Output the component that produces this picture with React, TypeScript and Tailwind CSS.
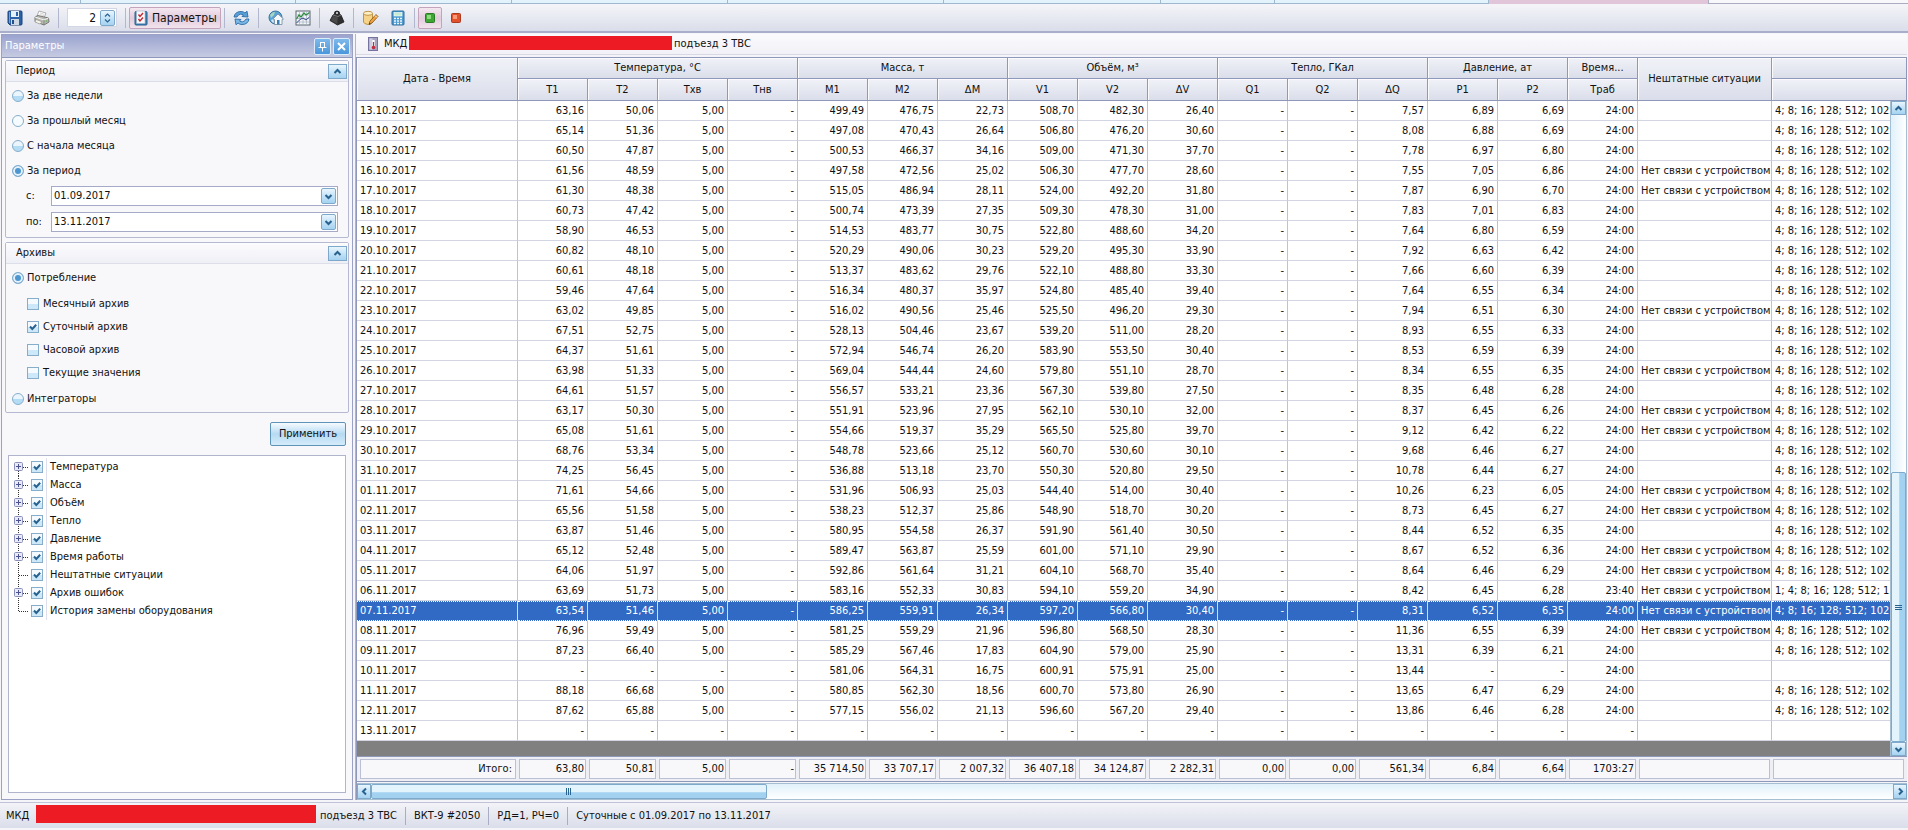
import { useState, type ReactNode } from 'react';

const LINK_LOST = 'Нет связи с устройством';
const ERRORS = '4; 8; 16; 128; 512; 102';

// date | T1 T2 Tхв Tнв M1 M2 ΔM V1 V2 ΔV Q1 Q2 ΔQ P1 P2 Траб | link lost | error codes
const RAW: [string, string, boolean, string][] = [
  ['13.10.2017', '63,16 50,06 5,00 - 499,49 476,75 22,73 508,70 482,30 26,40 - - 7,57 6,89 6,69 24:00', false, ERRORS],
  ['14.10.2017', '65,14 51,36 5,00 - 497,08 470,43 26,64 506,80 476,20 30,60 - - 8,08 6,88 6,69 24:00', false, ERRORS],
  ['15.10.2017', '60,50 47,87 5,00 - 500,53 466,37 34,16 509,00 471,30 37,70 - - 7,78 6,97 6,80 24:00', false, ERRORS],
  ['16.10.2017', '61,56 48,59 5,00 - 497,58 472,56 25,02 506,30 477,70 28,60 - - 7,55 7,05 6,86 24:00', true, ERRORS],
  ['17.10.2017', '61,30 48,38 5,00 - 515,05 486,94 28,11 524,00 492,20 31,80 - - 7,87 6,90 6,70 24:00', true, ERRORS],
  ['18.10.2017', '60,73 47,42 5,00 - 500,74 473,39 27,35 509,30 478,30 31,00 - - 7,83 7,01 6,83 24:00', false, ERRORS],
  ['19.10.2017', '58,90 46,53 5,00 - 514,53 483,77 30,75 522,80 488,60 34,20 - - 7,64 6,80 6,59 24:00', false, ERRORS],
  ['20.10.2017', '60,82 48,10 5,00 - 520,29 490,06 30,23 529,20 495,30 33,90 - - 7,92 6,63 6,42 24:00', false, ERRORS],
  ['21.10.2017', '60,61 48,18 5,00 - 513,37 483,62 29,76 522,10 488,80 33,30 - - 7,66 6,60 6,39 24:00', false, ERRORS],
  ['22.10.2017', '59,46 47,64 5,00 - 516,34 480,37 35,97 524,80 485,40 39,40 - - 7,64 6,55 6,34 24:00', false, ERRORS],
  ['23.10.2017', '63,02 49,85 5,00 - 516,02 490,56 25,46 525,50 496,20 29,30 - - 7,94 6,51 6,30 24:00', true, ERRORS],
  ['24.10.2017', '67,51 52,75 5,00 - 528,13 504,46 23,67 539,20 511,00 28,20 - - 8,93 6,55 6,33 24:00', false, ERRORS],
  ['25.10.2017', '64,37 51,61 5,00 - 572,94 546,74 26,20 583,90 553,50 30,40 - - 8,53 6,59 6,39 24:00', false, ERRORS],
  ['26.10.2017', '63,98 51,33 5,00 - 569,04 544,44 24,60 579,80 551,10 28,70 - - 8,34 6,55 6,35 24:00', true, ERRORS],
  ['27.10.2017', '64,61 51,57 5,00 - 556,57 533,21 23,36 567,30 539,80 27,50 - - 8,35 6,48 6,28 24:00', false, ERRORS],
  ['28.10.2017', '63,17 50,30 5,00 - 551,91 523,96 27,95 562,10 530,10 32,00 - - 8,37 6,45 6,26 24:00', true, ERRORS],
  ['29.10.2017', '65,08 51,61 5,00 - 554,66 519,37 35,29 565,50 525,80 39,70 - - 9,12 6,42 6,22 24:00', true, ERRORS],
  ['30.10.2017', '68,76 53,34 5,00 - 548,78 523,66 25,12 560,70 530,60 30,10 - - 9,68 6,46 6,27 24:00', false, ERRORS],
  ['31.10.2017', '74,25 56,45 5,00 - 536,88 513,18 23,70 550,30 520,80 29,50 - - 10,78 6,44 6,27 24:00', false, ERRORS],
  ['01.11.2017', '71,61 54,66 5,00 - 531,96 506,93 25,03 544,40 514,00 30,40 - - 10,26 6,23 6,05 24:00', true, ERRORS],
  ['02.11.2017', '65,56 51,58 5,00 - 538,23 512,37 25,86 548,90 518,70 30,20 - - 8,73 6,45 6,27 24:00', true, ERRORS],
  ['03.11.2017', '63,87 51,46 5,00 - 580,95 554,58 26,37 591,90 561,40 30,50 - - 8,44 6,52 6,35 24:00', false, ERRORS],
  ['04.11.2017', '65,12 52,48 5,00 - 589,47 563,87 25,59 601,00 571,10 29,90 - - 8,67 6,52 6,36 24:00', true, ERRORS],
  ['05.11.2017', '64,06 51,97 5,00 - 592,86 561,64 31,21 604,10 568,70 35,40 - - 8,64 6,46 6,29 24:00', true, ERRORS],
  ['06.11.2017', '63,69 51,73 5,00 - 583,16 552,33 30,83 594,10 559,20 34,90 - - 8,42 6,45 6,28 23:40', true, '1; 4; 8; 16; 128; 512; 1'],
  ['07.11.2017', '63,54 51,46 5,00 - 586,25 559,91 26,34 597,20 566,80 30,40 - - 8,31 6,52 6,35 24:00', true, ERRORS],
  ['08.11.2017', '76,96 59,49 5,00 - 581,25 559,29 21,96 596,80 568,50 28,30 - - 11,36 6,55 6,39 24:00', true, ERRORS],
  ['09.11.2017', '87,23 66,40 5,00 - 585,29 567,46 17,83 604,90 579,00 25,90 - - 13,31 6,39 6,21 24:00', false, ERRORS],
  ['10.11.2017', '- - - - 581,06 564,31 16,75 600,91 575,91 25,00 - - 13,44 - - 24:00', false, ''],
  ['11.11.2017', '88,18 66,68 5,00 - 580,85 562,30 18,56 600,70 573,80 26,90 - - 13,65 6,47 6,29 24:00', false, ERRORS],
  ['12.11.2017', '87,62 65,88 5,00 - 577,15 556,02 21,13 596,60 567,20 29,40 - - 13,86 6,46 6,28 24:00', false, ERRORS],
  ['13.11.2017', '- - - - - - - - - - - - - - - -', false, ''],
];

const TOTALS = ['63,80', '50,81', '5,00', '-', '35 714,50', '33 707,17', '2 007,32', '36 407,18', '34 124,87', '2 282,31', '0,00', '0,00', '561,34', '6,84', '6,64', '1703:27'];

const GROUPS = [
  { title: 'Температура, °C', cols: ['T1', 'T2', 'Tхв', 'Tнв'] },
  { title: 'Масса, т', cols: ['M1', 'M2', 'ΔM'] },
  { title: 'Объём, м³', cols: ['V1', 'V2', 'ΔV'] },
  { title: 'Тепло, ГКал', cols: ['Q1', 'Q2', 'ΔQ'] },
  { title: 'Давление, ат', cols: ['P1', 'P2'] },
  { title: 'Время...', cols: ['Tраб'] },
];

const TREE = [
  { label: 'Температура', open: true },
  { label: 'Масса', open: true },
  { label: 'Объём', open: true },
  { label: 'Тепло', open: true },
  { label: 'Давление', open: true },
  { label: 'Время работы', open: true },
  { label: 'Нештатные ситуации', open: false },
  { label: 'Архив ошибок', open: true },
  { label: 'История замены оборудования', open: false },
];

const blueButton = 'flex items-center justify-center border border-[#7fa9cb] bg-linear-to-b from-[#eaf6fe] via-[#c4e3f7] to-[#a5d3f1]';
const headCell = 'border-r border-b border-[#8f97ba] bg-linear-to-b from-[#f1f2f8] to-[#dadeea] p-0 text-center font-normal shadow-[inset_1px_1px_0_#fbfbfe]';

/* ---------- icons ---------- */

function Chevron({ dir }: { dir: 'up' | 'down' | 'left' | 'right' }) {
  const paths = {
    up: 'M1.5 6 L4.5 3 L7.5 6',
    down: 'M1.5 3 L4.5 6 L7.5 3',
    left: 'M6 1.5 L3 4.5 L6 7.5',
    right: 'M3 1.5 L6 4.5 L3 7.5',
  };
  return (
    <svg width="9" height="9" viewBox="0 0 9 9" fill="none" stroke="#28628f" strokeWidth="2">
      <path d={paths[dir]} />
    </svg>
  );
}

function SaveIcon() {
  return (
    <svg width="16" height="16" viewBox="0 0 16 16">
      <path d="M1 2 Q1 1 2 1 H14 Q15 1 15 2 V14 Q15 15 14 15 H3 L1 13 Z" fill="#2c63a8" stroke="#1c4379" />
      <rect x="4" y="1" width="8" height="6" fill="#e6f0fa" />
      <rect x="9" y="2" width="2" height="4" fill="#2c63a8" />
      <rect x="4" y="9" width="8" height="6" fill="#cfd9e4" />
      <rect x="5" y="10" width="2" height="4" fill="#24508a" />
      <path d="M2.5 2 V13" stroke="#6fa3dc" />
    </svg>
  );
}

function PrinterIcon() {
  return (
    <svg width="16" height="16" viewBox="0 0 16 16" strokeLinejoin="round">
      <path d="M5 1 L12 3 L10 8 L3 6 Z" fill="#fff" stroke="#9a9a9a" strokeWidth=".8" />
      <path d="M6 3 L10.5 4.3 M5.5 4.5 L10 5.8" stroke="#bbb" strokeWidth=".6" />
      <path d="M1 7 L4 5.5 L14.5 8 L15 12 L10 15 L1 11.5 Z" fill="#b9b9b4" stroke="#6d6d69" strokeWidth=".9" />
      <path d="M1 7 L10 10 L14.5 8" fill="none" stroke="#f4f4f0" />
      <path d="M10 10 V15" stroke="#777" strokeWidth=".8" />
      <path d="M2 9.5 L8 11.7 L6 14 L1 12 Z" fill="#f5f5ee" stroke="#8b8b84" strokeWidth=".6" />
      <circle cx="12.5" cy="11" r=".8" fill="#5fae4c" />
    </svg>
  );
}

function ChecklistIcon() {
  return (
    <svg width="14" height="16" viewBox="0 0 14 16">
      <rect x="1" y="1.5" width="12" height="13.5" rx="1" fill="#3f82b8" stroke="#27608f" />
      <rect x="2.5" y="1" width="8.5" height="12.5" fill="#f4f6fa" stroke="#9fb6cc" strokeWidth=".6" />
      <path d="M4.5 4.5 L6 6.5 L9 3 M4.5 9 L6 11 L9 7.5" fill="none" stroke="#c4272e" strokeWidth="1.4" />
    </svg>
  );
}

function RefreshIcon() {
  return (
    <svg width="17" height="16" viewBox="0 0 17 16" strokeLinejoin="round">
      <path d="M1 7 Q2 1.5 8 1.5 Q10.5 1.5 12 3 L14 1.2 L15 7 L9 6.5 L10.5 5 Q9 4 7.5 4.2 Q5 4.5 4 7 Z" fill="#5aa0d8" stroke="#2b6ba6" strokeWidth=".9" />
      <path d="M16 9 Q15 14.5 9 14.5 Q6.5 14.5 5 13 L3 14.8 L2 9 L8 9.5 L6.5 11 Q8 12 9.5 11.8 Q12 11.5 13 9 Z" fill="#7ab8e6" stroke="#2b6ba6" strokeWidth=".9" />
    </svg>
  );
}

function HomeGlobeIcon() {
  return (
    <svg width="16" height="16" viewBox="0 0 16 16" strokeLinejoin="round">
      <circle cx="7.5" cy="7.5" r="6.5" fill="#5ba3d6" stroke="#39759f" />
      <path d="M2 5 Q4 1.8 7 2 L6 5 L3 8 Z" fill="#a6d5c0" />
      <path d="M3 10 L5.5 9 L6 13 Q3.5 12.5 3 10" fill="#cfe7f6" />
      <path d="M5 9 L10 4 L15.5 9 L14 9.5 V14.5 H6.5 V9.5 Z" fill="#f7fafc" stroke="#7d93a6" strokeWidth=".9" />
      <rect x="9" y="10" width="2.5" height="4.5" fill="#3b7fb8" />
    </svg>
  );
}

function ChartIcon() {
  return (
    <svg width="16" height="16" viewBox="0 0 16 16" fill="none">
      <rect x="1" y="1" width="14" height="14" fill="#f2f5f8" stroke="#5c6670" />
      <path d="M4.5 1 V15 M8 1 V15 M11.5 1 V15 M1 5 H15 M1 8.5 H15 M1 12 H15" stroke="#a3b2c2" strokeWidth=".7" />
      <path d="M1.5 9 L4 5 L6 7 L9 3 L11 5 L14.5 2.5" stroke="#2c8a3d" strokeWidth="1.2" />
      <path d="M1.5 13 L5 9.5 L8 8 L11 10 L14.5 7" stroke="#3c4e8f" />
    </svg>
  );
}

function WeightIcon() {
  return (
    <svg width="16" height="16" viewBox="0 0 16 16" strokeLinejoin="round">
      <path d="M5.5 4 Q5 1 8 1 Q11 1 10.5 4 L12 5 L15 12 L8.5 15 L1 10.5 L4 5 Z" fill="#2f2f2f" stroke="#1a1a1a" strokeWidth=".8" />
      <path d="M4 5 L9 6.5 L12 5" fill="none" stroke="#8c8c8c" strokeWidth=".8" />
      <path d="M4 6 L1.8 10.3 L8.3 14 L8.8 7.3 Z" fill="#4a4a4a" />
      <circle cx="8" cy="3" r="1" fill="#e4e6ef" />
    </svg>
  );
}

function EditIcon() {
  return (
    <svg width="17" height="16" viewBox="0 0 17 16" strokeLinejoin="round">
      <path d="M1.5 3.5 V12 Q2 14 6 14.5 Q10 14.3 10.5 12 V3.5 Z" fill="#f5d489" stroke="#b98a3a" strokeWidth=".9" />
      <ellipse cx="6" cy="3.3" rx="4.5" ry="2" fill="#fdf0c9" stroke="#b98a3a" strokeWidth=".9" />
      <path d="M7 14.5 L8 11 L14 4.5 L16 6.5 L10 13 Z" fill="#f0a33c" stroke="#7f5315" strokeWidth=".8" />
      <path d="M13 5.5 L15 7.5" stroke="#fff" strokeWidth=".8" />
      <path d="M7 14.5 L7.5 12.8 L8.7 14 Z" fill="#333" />
    </svg>
  );
}

function CalculatorIcon() {
  return (
    <svg width="14" height="16" viewBox="0 0 14 16">
      <rect x="1" y="1" width="12" height="14" rx="1" fill="#4d9ad0" stroke="#2c6c9f" />
      <rect x="3" y="2.5" width="8" height="3.5" fill="#c5ebd0" stroke="#fff" strokeWidth=".6" />
      <path d="M3 8.5 H11 M3 11 H11 M3 13.5 H11" stroke="#eaf5fc" strokeWidth="1.5" strokeDasharray="2 1" />
    </svg>
  );
}

function ThermoIcon() {
  return (
    <svg width="10" height="14" viewBox="0 0 10 14">
      <rect x=".5" y=".5" width="9" height="13" fill="#a5a2c2" stroke="#7673a0" />
      <rect x="1.5" y="1.5" width="3" height="11" fill="#cfcde2" />
      <path d="M5.5 3 V10" stroke="#fff" strokeWidth="2.4" />
      <path d="M5.5 5 V10" stroke="#b8323e" strokeWidth="1.2" />
      <circle cx="5.5" cy="10.5" r="1.8" fill="#c22c3a" />
    </svg>
  );
}

function SquareIcon({ fill, edge, shine }: { fill: string; edge: string; shine: string }) {
  return (
    <svg width="10" height="10" viewBox="0 0 10 10">
      <rect x=".5" y=".5" width="9" height="9" rx="1" fill={fill} stroke={edge} />
      <rect x="2" y="2" width="4" height="4" fill={shine} />
    </svg>
  );
}

/* ---------- small controls ---------- */

function Tick({ label, id, on = false }: { label?: string; id: string; on?: boolean }) {
  const [checked, setChecked] = useState(on);
  return (
    <span className="flex items-center">
      <span className="relative flex">
        <input
          id={id}
          type="checkbox"
          checked={checked}
          onChange={() => setChecked(!checked)}
          className="h-3 w-3 appearance-none border border-[#86aecb] bg-linear-to-b from-[#f4fafe] from-50% to-[#cde8f8] to-50%"
        />
        {checked && (
          <svg className="pointer-events-none absolute inset-0" width="12" height="12" viewBox="0 0 12 12" fill="none" stroke="#28628f" strokeWidth="2">
            <path d="M3 5.5 L5.3 8 L9.2 3.8" />
          </svg>
        )}
      </span>
      {label && <label htmlFor={id} className="ml-1">{label}</label>}
    </span>
  );
}

function Radio({ name, label, on = false, pale = false }: { name: string; label: string; on?: boolean; pale?: boolean }) {
  return (
    <label className="flex h-[25px] items-center gap-[3px] pl-1.5">
      <input
        type="radio"
        name={name}
        defaultChecked={on}
        className={`h-3 w-3 appearance-none rounded-full border border-[#86aecb] checked:bg-none checked:bg-[#4d96cf] checked:shadow-[inset_0_0_0_2px_#e3f2fc] ${
          pale ? 'bg-[#f6fbff]' : 'bg-linear-to-b from-[#eaf5fd] from-50% to-[#b4dcf5] to-50%'
        }`}
      />
      {label}
    </label>
  );
}

function DateField({ id, label, value }: { id: string; label: string; value: string }) {
  return (
    <div className="flex h-5 items-center pr-2.5 pl-5">
      <label htmlFor={id} className="w-[25px]">{label}</label>
      <div className="flex h-5 flex-1 items-center border border-[#a5aac8] bg-white pr-px">
        <input id={id} defaultValue={value} className="min-w-0 flex-1 pl-0.5 outline-none" />
        <button aria-label="Открыть календарь" className={`${blueButton} h-4 w-[15px] rounded-xs`}>
          <Chevron dir="down" />
        </button>
      </div>
    </div>
  );
}

function Group({ title, children }: { title: string; children: ReactNode }) {
  return (
    <section className="mb-1 rounded-xs border border-[#b5b9d2] bg-[#f8f8fb] pb-px">
      <header className="flex h-[21px] items-center justify-between border-b border-[#dcdee9] bg-linear-to-b from-[#fcfcfe] to-[#efeff6] pr-px pl-2.5">
        <h2>{title}</h2>
        <button aria-label="Свернуть" className={`${blueButton} h-[15px] w-[19px]`}>
          <Chevron dir="up" />
        </button>
      </header>
      {children}
    </section>
  );
}

function Separator() {
  return <span className="mx-[3px] h-5 w-px bg-[#b3b7cd]" />;
}

function ToolButton({ label, children }: { label: string; children: ReactNode }) {
  return (
    <button aria-label={label} className="flex h-[22px] w-[27px] items-center justify-center">
      {children}
    </button>
  );
}

/* ---------- layout parts ---------- */

function TabStrip() {
  const tab = 'border-r border-b border-[#9db8cf] bg-[#e2f3fc]';
  return (
    <div className="grid h-1 grid-cols-[81fr_215fr_216fr_216fr_216fr_216fr_114fr_214fr_219fr_200fr]">
      <div className={tab} />
      <div className={tab} />
      <div className={tab} />
      <div className={tab} />
      <div className={tab} />
      <div className={tab} />
      <div className={tab} />
      <div className={tab} />
      <div className="border-b border-[#e0c6d8] bg-[#e0c6d8]" />
      <div className="border-b border-l border-[#a9adc4] bg-[#f8f8fb]" />
    </div>
  );
}

function Toolbar() {
  const on = 'border border-[#c4a3bd] bg-linear-to-b from-[#f4e8f0] via-[#e3cbdc] to-[#f1e3ec]';
  return (
    <div className="flex h-[29px] items-center border-b-2 border-[#a9aecb] bg-linear-to-b from-[#f5f5f9] to-[#dadeea] pl-px text-xs">
      <ToolButton label="Сохранить"><SaveIcon /></ToolButton>
      <ToolButton label="Печать"><PrinterIcon /></ToolButton>
      <Separator />
      <div className="mx-[5px] flex h-[19px] w-[50px] items-center border border-[#d3d6e4] bg-white pr-px">
        <input aria-label="Знаков после запятой" defaultValue="2" className="w-8 pr-1 text-right outline-none" />
        <button aria-label="Изменить значение" className={`${blueButton} h-4 w-[15px] flex-col rounded-xs`}>
          <svg width="7" height="10" viewBox="0 0 7 10" fill="none" stroke="#28628f" strokeWidth="1.2">
            <path d="M1 3.5 L3.5 1 L6 3.5 M1 6.5 L3.5 9 L6 6.5" />
          </svg>
        </button>
      </div>
      <Separator />
      <button className={`flex h-[22px] w-[92px] items-center gap-1 rounded-xs pl-1 ${on}`}>
        <ChecklistIcon />
        Параметры
      </button>
      <Separator />
      <ToolButton label="Обновить"><RefreshIcon /></ToolButton>
      <Separator />
      <ToolButton label="Объект"><HomeGlobeIcon /></ToolButton>
      <ToolButton label="График"><ChartIcon /></ToolButton>
      <Separator />
      <ToolButton label="Масса"><WeightIcon /></ToolButton>
      <Separator />
      <ToolButton label="Редактировать"><EditIcon /></ToolButton>
      <ToolButton label="Расчёт"><CalculatorIcon /></ToolButton>
      <Separator />
      <button aria-label="Запустить" className={`flex h-[22px] w-6 items-center justify-center rounded-xs ${on}`}>
        <SquareIcon fill="#3fa535" edge="#2c7a26" shine="#8fdc7c" />
      </button>
      <ToolButton label="Остановить"><SquareIcon fill="#e2502c" edge="#a83a20" shine="#f79a78" /></ToolButton>
    </div>
  );
}

function TreeRow({ label, open, first, last, id }: { label: string; open: boolean; first: boolean; last: boolean; id: string }) {
  return (
    <li className="flex h-[18px] items-center">
      <svg width="22" height="18" viewBox="0 0 22 18" fill="none">
        <path d={first ? 'M9.5 9 V18' : last ? 'M9.5 0 V10' : 'M9.5 0 V18'} stroke="#333" strokeDasharray="1 1" />
        <path d="M10 9.5 H19" stroke="#333" strokeDasharray="1 1" />
        {open && (
          <>
            <rect x="5.5" y="4.5" width="8" height="8" rx="1" fill="#e9eaf6" stroke="#8a90b8" />
            <path d="M7 8.5 H12 M9.5 6 V11" stroke="#4a5390" />
          </>
        )}
      </svg>
      <Tick id={id} on />
      <span className="ml-[3px] h-[18px] w-1 border-l border-[#dfe0ee]" />
      <label htmlFor={id}>{label}</label>
    </li>
  );
}

function ParametersPanel() {
  const titleButton = 'flex h-[17px] w-[17px] items-center justify-center rounded-xs border border-[#dcebf9] bg-linear-to-b from-[#7db9ea] to-[#4a97db]';
  return (
    <aside className="flex w-[352px] shrink-0 flex-col border border-[#9aa1c4] bg-[#f8f8fb]">
      <header className="flex h-[23px] items-center border-b border-[#8f97ba] bg-linear-to-b from-[#9ba4cf] to-[#c6cbe2] pr-0.5 pl-[3px] text-white">
        <h1 className="flex-1">Параметры</h1>
        <button aria-label="Закрепить" className={titleButton}>
          <svg width="9" height="11" viewBox="0 0 9 11" fill="none" stroke="#fff">
            <path d="M2.5 1 V6 M6.5 1 V6 M2 1.5 H7 M0.5 6.5 H8.5 M4.5 7 V10.5" />
          </svg>
        </button>
        <button aria-label="Закрыть" className={`${titleButton} ml-0.5`}>
          <svg width="9" height="9" viewBox="0 0 9 9" stroke="#fff" strokeWidth="2">
            <path d="M1 1 L8 8 M8 1 L1 8" />
          </svg>
        </button>
      </header>
      <div className="flex flex-1 flex-col px-[3px] pt-0.5 pb-1.5">
        <Group title="Период">
          <div className="pt-px">
            <Radio name="period" label="За две недели" />
            <Radio name="period" label="За прошлый месяц" pale />
            <Radio name="period" label="С начала месяца" />
            <Radio name="period" label="За период" on />
          </div>
          <div className="grid gap-1.5 pt-[3px] pb-1">
            <DateField id="from" label="с:" value="01.09.2017" />
            <DateField id="to" label="по:" value="13.11.2017" />
          </div>
        </Group>
        <Group title="Архивы">
          <div className="pt-px">
            <Radio name="archive" label="Потребление" on />
            <div className="grid auto-rows-[23px] items-center py-0.5 pl-[21px]">
              <Tick id="month" label="Месячный архив" />
              <Tick id="day" label="Суточный архив" on />
              <Tick id="hour" label="Часовой архив" />
              <Tick id="now" label="Текущие значения" />
            </div>
            <Radio name="archive" label="Интеграторы" />
          </div>
        </Group>
        <button className="mt-[5px] mr-[3px] h-6 w-[76px] self-end rounded-xs border border-[#5f93b8] bg-linear-to-b from-[#f6fbff] via-[#b5daf2] to-[#d5ecfa]">
          Применить
        </button>
        <ul className="mx-[3px] mt-[9px] flex-1 border border-[#b0b4cd] bg-white pt-0.5">
          {TREE.map((node, i) => (
            <TreeRow key={node.label} id={`tree-${i}`} label={node.label} open={node.open} first={i === 0} last={i === TREE.length - 1} />
          ))}
        </ul>
      </div>
    </aside>
  );
}

function Columns() {
  return (
    <colgroup>
      <col className="w-[161px]" />
      {TOTALS.map((_, i) => (
        <col key={i} className="w-[70px]" />
      ))}
      <col className="w-[134px]" />
      <col />
    </colgroup>
  );
}

function VerticalScroll() {
  return (
    <div className="flex w-[17px] shrink-0 flex-col border-x border-[#a5bed2] bg-linear-to-r from-[#e0f1fb] to-white">
      <button aria-label="Вверх" className={`${blueButton} h-3.5`}><Chevron dir="up" /></button>
      <div className="flex flex-1 flex-col">
        <div className="basis-[57%]" />
        <div className="flex flex-1 flex-col items-center justify-center gap-px rounded-xs border border-[#7fa9cb] bg-linear-to-r from-[#e3f4fd] from-50% to-[#a3d2f0] to-60%">
          <span className="h-px w-[7px] bg-[#28628f]" />
          <span className="h-px w-[7px] bg-[#28628f]" />
          <span className="h-px w-[7px] bg-[#28628f]" />
        </div>
      </div>
      <button aria-label="Вниз" className={`${blueButton} h-3.5`}><Chevron dir="down" /></button>
    </div>
  );
}

function HorizontalScroll() {
  return (
    <div className="mt-px flex h-[17px] border-y border-[#a5bed2] bg-linear-to-b from-[#e0f1fb] to-white">
      <button aria-label="Влево" className={`${blueButton} w-3.5`}><Chevron dir="left" /></button>
      <div className="flex flex-1">
        <div className="flex basis-[26%] items-center justify-center gap-px rounded-xs border border-[#7fa9cb] bg-linear-to-b from-[#e3f4fd] from-50% to-[#a3d2f0] to-60%">
          <span className="h-[7px] w-px bg-[#28628f]" />
          <span className="h-[7px] w-px bg-[#28628f]" />
          <span className="h-[7px] w-px bg-[#28628f]" />
        </div>
      </div>
      <button aria-label="Вправо" className={`${blueButton} w-3.5`}><Chevron dir="right" /></button>
    </div>
  );
}

function ArchiveGrid() {
  const [selected, setSelected] = useState('07.11.2017');
  const table = 'w-full table-fixed border-separate border-spacing-0';

  return (
    <div className="flex flex-1 flex-col border-l border-[#8f97ba]">
      <table className={table}>
        <Columns />
        <thead>
          <tr className="h-[22px]">
            <th rowSpan={2} className={`${headCell} border-t`}>Дата - Время</th>
            {GROUPS.map((g) => (
              <th key={g.title} colSpan={g.cols.length} className={`${headCell} border-t`}>{g.title}</th>
            ))}
            <th rowSpan={2} className={`${headCell} border-t`}>Нештатные ситуации</th>
            <th className={`${headCell} border-t`} />
          </tr>
          <tr className="h-[22px]">
            {GROUPS.flatMap((g) => g.cols).map((c) => (
              <th key={c} className={headCell}>{c}</th>
            ))}
            <th className={headCell} />
          </tr>
        </thead>
      </table>

      <div className="flex flex-1">
        <div className="flex-1 bg-[#808080]">
          <table className={table}>
            <Columns />
            <tbody>
              {RAW.map(([date, values, lost, errors]) => {
                const active = date === selected;
                const line = active
                  ? 'border-r border-[#cfdcf2] border-y border-y-white [border-block-style:dotted]'
                  : 'border-r border-b border-r-[#bfc2d6] border-b-[#d3d5e2]';
                return (
                  <tr key={date} onClick={() => setSelected(date)} className={`h-5 ${active ? 'bg-[#316ac5] text-white' : 'bg-white'}`}>
                    <td className={`py-0 pr-0 pl-[3px] ${line} ${active ? '' : 'border-r-[#8088b0]'}`}>{date}</td>
                    {values.split(' ').map((v, i) => (
                      <td key={i} className={`py-0 pr-[3px] pl-0 text-right ${line}`}>{v}</td>
                    ))}
                    <td className={`py-0 pr-0 pl-[3px] whitespace-nowrap ${line}`}>{lost ? LINK_LOST : ''}</td>
                    <td className={`border-r-0 py-0 pr-0 pl-[3px] whitespace-nowrap ${line}`}>{errors}</td>
                  </tr>
                );
              })}
            </tbody>
          </table>
        </div>
        <VerticalScroll />
      </div>

      <table className={`${table} border-y border-[#8f97ba] bg-[#eeeff5]`}>
        <Columns />
        <tbody>
          <tr className="h-6">
            <td className="p-0.5 pl-[3px]">
              <div className="flex h-5 items-center justify-end border border-[#bcc0d6] bg-[#f8f8fb] pr-[3px]">Итого:</div>
            </td>
            {TOTALS.map((t, i) => (
              <td key={i} className="py-0.5 pr-0.5 pl-px">
                <div className="flex h-5 items-center justify-end border border-[#bcc0d6] bg-[#f8f8fb] pr-px whitespace-nowrap">{t}</div>
              </td>
            ))}
            <td className="py-0.5 pr-0.5 pl-px"><div className="h-5 border border-[#bcc0d6] bg-[#f8f8fb]" /></td>
            <td className="py-0.5 pr-[3px] pl-px"><div className="h-5 border border-[#bcc0d6] bg-[#f8f8fb]" /></td>
          </tr>
        </tbody>
      </table>
      <HorizontalScroll />
    </div>
  );
}

function StatusBar() {
  const cell = 'flex h-[18px] items-center border-l border-[#a9adc4] px-2';
  return (
    <footer className="mb-0.5 flex h-[26px] items-center border-t border-[#c0c3d8] bg-linear-to-b from-[#f3f3f8] to-[#dadeea]">
      <div className="flex h-[18px] items-center pr-2 pl-1.5">
        <span className="w-[30px]">МКД</span>
        <span className="mb-1 h-[18px] w-[280px] bg-[#ed1c24]" />
        <span className="pl-1">подъезд 3 ТВС</span>
      </div>
      <span className={cell}>ВКТ-9 #2050</span>
      <span className={cell}>РД=1, РЧ=0</span>
      <span className={cell}>Суточные с 01.09.2017 по 13.11.2017</span>
    </footer>
  );
}

export default function App() {
  return (
    <div className="flex min-h-screen flex-col bg-[#f4f4f9] font-['DejaVu_Sans_Condensed','DejaVu_Sans',sans-serif] text-[11px] leading-4 text-[#111]">
      <TabStrip />
      <Toolbar />
      <main className="flex flex-1 px-px pt-px pb-0.5">
        <ParametersPanel />
        <section className="ml-0.5 flex flex-1 flex-col border-l border-[#b0b4cd]">
          <header className="mb-0.5 flex h-[21px] items-center border-b border-[#d7d9e6] bg-linear-to-b from-[#fbfbfd] to-[#f1f1f7] pl-3">
            <ThermoIcon />
            <span className="w-[31px] pl-1.5">МКД</span>
            <span className="mb-0.5 h-3.5 w-[263px] bg-[#ed1c24]" />
            <span className="pl-0.5">подъезд 3 ТВС</span>
          </header>
          <ArchiveGrid />
        </section>
      </main>
      <StatusBar />
    </div>
  );
}
